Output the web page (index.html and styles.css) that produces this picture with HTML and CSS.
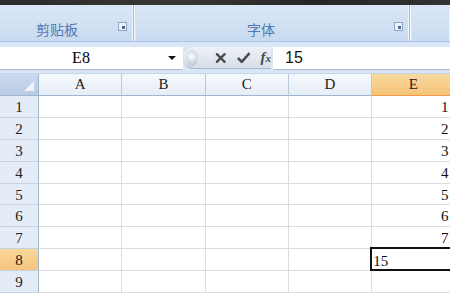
FILE: index.html
```html
<!DOCTYPE html>
<html lang="zh-CN">
<head>
    <meta charset="UTF-8">
    <title>Excel</title>
    <link rel="stylesheet" href="styles.css">
</head>
<body>
    <div class="ribbon">
        <div class="ribbon-top"></div>
        <div class="groups">
            <div class="group clipboard">
                <span class="group-label">剪贴板</span>
                <span class="launcher"></span>
            </div>
            <div class="group font">
                <span class="group-label">字体</span>
                <span class="launcher"></span>
            </div>
            <div class="group rest"></div>
        </div>
    </div>

    <div class="formula-bar">
        <div class="name-box">
            <span class="cell-ref">E8</span>
            <span class="arrow"></span>
        </div>
        <div class="fx-buttons">
            <span class="nub"></span>
            <svg class="btn" width="14" height="14" viewBox="0 0 14 14">
                <path d="M3 3 L11 11 M11 3 L3 11" stroke="#4a4a4a" stroke-width="2.4" stroke-linecap="round"/>
            </svg>
            <svg class="btn" width="16" height="14" viewBox="0 0 16 14">
                <path d="M2 7 L6 11 L14 2" fill="none" stroke="#4a4a4a" stroke-width="2.6" stroke-linejoin="round"/>
            </svg>
            <span class="fx">f<span class="fx-x">x</span></span>
        </div>
        <div class="formula-input">15</div>
    </div>

    <div class="sheet">
        <div class="corner"><span class="corner-mark"></span></div>
        <div class="col-head">A</div>
        <div class="col-head">B</div>
        <div class="col-head">C</div>
        <div class="col-head">D</div>
        <div class="col-head active">E</div>
    </div>
    <div class="rows" id="rows"></div>

    <script>
        const rows = document.getElementById("rows");
        for (let r = 1; r <= 9; r++) {
            const head = document.createElement("div");
            head.className = r === 8 ? "row-head active" : "row-head";
            head.textContent = r;
            rows.appendChild(head);
            for (let c = 0; c < 5; c++) {
                const cell = document.createElement("div");
                cell.className = "cell";
                if (c === 4 && r <= 7) {
                    cell.className = "cell num";
                    cell.textContent = r;
                }
                if (c === 4 && r === 8) {
                    cell.className = "cell selected";
                    cell.textContent = "15";
                }
                rows.appendChild(cell);
            }
        }
    </script>
</body>
</html>
```

FILE: styles.css
```css
body {
    margin: 0;
    width: 450px;
    height: 300px;
    overflow: hidden;
    background-color: #ffffff;
    font-family: "Liberation Serif", "DejaVu Serif", serif;
}

/* ribbon */
.ribbon {
    height: 47px;
    background: linear-gradient(#cfdff3, #dbe7f6);
}

.ribbon-top {
    height: 5px;
    background: linear-gradient(90deg, #2b2b2b, #3a3836 40%, #262626 70%, #333 100%);
}

.groups {
    display: flex;
    height: 36px;
    border-bottom: 1px solid #a9c3e4;
}

.group {
    position: relative;
    display: flex;
    align-items: flex-end;
    justify-content: flex-start;
    padding-bottom: 4px;
    background: linear-gradient(#d9e6f6, #d0e0f3 60%, #c8daf0);
    border-right: 1px solid #9fbbdf;
    box-shadow: inset -1px 0 0 #eef4fb, 1px 0 0 #f4f8fd;
    box-sizing: border-box;
}

.clipboard {
    width: 134px;
    padding-left: 36px;
}

.font {
    width: 274px;
    margin-left: 2px;
    padding-left: 111px;
}

.rest {
    flex: 1;
    margin-left: 2px;
    border-right: none;
}

.group-label {
    font-family: "Noto Sans CJK SC", sans-serif;
    font-size: 14px;
    line-height: 16px;
    color: #5179b2;
}

.launcher {
    position: absolute;
    right: 6px;
    bottom: 10px;
    width: 7px;
    height: 7px;
    border: 1px solid #8aa3c2;
    background: #eef3fa;
}

.launcher::after {
    content: "";
    position: absolute;
    right: 1px;
    bottom: 1px;
    width: 3px;
    height: 3px;
    background: #55667e;
}

/* formula bar */
.formula-bar {
    display: flex;
    height: 27px;
    background: #dbe6f4;
    border-bottom: 1px solid #c5d6eb;
    box-sizing: border-box;
}

.name-box {
    width: 183px;
    height: 22px;
    background: #ffffff;
    border-bottom: 1px solid #a7b9d0;
    display: flex;
    align-items: center;
}

.cell-ref {
    width: 162px;
    text-align: center;
    font-family: "Liberation Serif", serif;
    font-size: 16px;
}

.arrow {
    width: 0;
    height: 0;
    border-left: 4px solid transparent;
    border-right: 4px solid transparent;
    border-top: 4px solid #111;
    margin-left: 6px;
}

.fx-buttons {
    display: flex;
    align-items: center;
    gap: 9px;
    width: 88px;
    height: 22px;
    padding-left: 3px;
    background: linear-gradient(#eef2f7, #d6dee8);
    border-radius: 11px 0 0 11px;
    box-sizing: border-box;
    border-bottom: 1px solid #a7b9d0;
}

.nub {
    width: 12px;
    height: 16px;
    border-radius: 50%;
    background: radial-gradient(circle at 45% 40%, #ffffff, #c4ccd6 70%);
    margin-right: 7px;
}

.fx {
    font-family: "Liberation Serif", serif;
    font-style: italic;
    font-weight: bold;
    font-size: 15px;
    color: #4a4a4a;
}

.fx-x {
    font-size: 11px;
}

.formula-input {
    flex: 1;
    margin-left: 2px;
    height: 22px;
    background: #ffffff;
    border-bottom: 1px solid #a7b9d0;
    padding-left: 12px;
    font-family: "Liberation Sans", Arial, sans-serif;
    font-size: 16px;
    line-height: 22px;
    color: #111;
}

/* sheet */
.sheet {
    display: grid;
    grid-template-columns: 39px repeat(5, 83.3px);
    height: 22px;
}

.corner {
    position: relative;
    background: linear-gradient(#c9d9ef, #b9cbe4);
    border-right: 1px solid #9eb6ce;
    border-bottom: 1px solid #9eb6ce;
}

.corner-mark {
    position: absolute;
    right: 4px;
    bottom: 4px;
    width: 0;
    height: 0;
    border-left: 10px solid transparent;
    border-bottom: 10px solid #f1f5fb;
}

.col-head {
    background: linear-gradient(#f6f9fc, #e6edf6);
    border-right: 1px solid #b9c9dd;
    border-bottom: 1px solid #9eb6ce;
    text-align: center;
    font-size: 15px;
    line-height: 21px;
    color: #222;
}

.col-head.active {
    background: linear-gradient(#f9d99f, #f5c377);
    border-bottom-color: #f2994a;
}

.rows {
    display: grid;
    grid-template-columns: 39px repeat(5, 83.3px);
    grid-auto-rows: 21.9px;
}

.row-head {
    background: #e4ecf7;
    border-right: 1px solid #9eb6ce;
    border-bottom: 1px solid #c5d2e3;
    text-align: center;
    font-size: 15px;
    line-height: 22px;
    color: #222;
}

.row-head.active {
    background: linear-gradient(#f9d79a, #f6c57c);
}

.cell {
    border-right: 1px solid #dadcdd;
    border-bottom: 1px solid #dadcdd;
    font-size: 15px;
    line-height: 22px;
    color: #111;
}

.num {
    text-align: right;
    padding-right: 6px;
}

.selected {
    position: relative;
    z-index: 1;
    margin: -2px 0 0 -2px;
    border: 2px solid #111;
    padding-left: 1px;
    line-height: 24px;
}
```
